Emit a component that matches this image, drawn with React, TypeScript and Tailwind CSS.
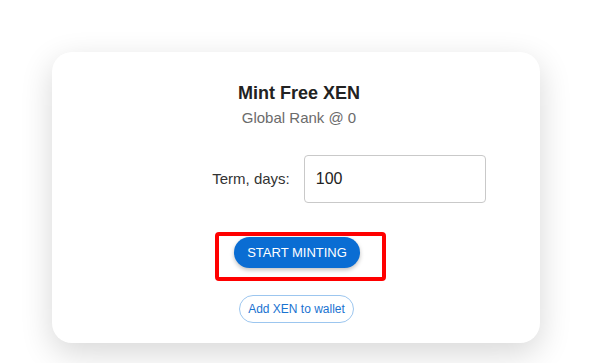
import React, { useState } from 'react';

export default function App() {
    const [term, setTerm] = useState('100');

    return (
        <div className="min-h-[363px] bg-white pt-[52px] font-['Liberation_Sans',Arial,sans-serif]">
            <div className="mx-auto w-[488px] rounded-[20px] bg-white pt-[30px] pb-[20px] shadow-[0_10px_32px_rgba(0,0,0,0.16)] flex flex-col items-center">
                <h1 className="ml-[6px] text-[18px] leading-[22px] font-bold text-[#222]">Mint Free XEN</h1>
                <p className="ml-[6px] mt-[5px] text-[15px] leading-[18px] text-[#6b6b6b]">Global Rank @ 0</p>

                <div className="mt-[28px] flex items-center gap-[14px] pl-[106px]">
                    <label className="text-[15px] text-[#333]">Term, days:</label>
                    <input
                        value={term}
                        onChange={(e) => setTerm(e.target.value)}
                        className="w-[182px] h-[48px] rounded-[4px] border border-[#c9c9c9] px-[11px] text-[16px] text-[#222] outline-none"
                    />
                </div>

                <div className="mt-[29px] ml-[9px] rounded-[4px] border-4 border-[#ff0000] pt-[1px] pb-[9px] pl-[15px] pr-[22px]">
                    <button className="h-[31px] w-[126px] rounded-full bg-[#0a6dd3] text-[13px] text-white shadow-[0_2px_4px_rgba(0,0,0,0.25)]">
                        START MINTING
                    </button>
                </div>

                <button className="mt-[14px] ml-[1px] h-[28px] w-[115px] rounded-full border border-[#9cc6ef] text-[12px] text-[#1a73d1]">
                    Add XEN to wallet
                </button>
            </div>
        </div>
    );
}
